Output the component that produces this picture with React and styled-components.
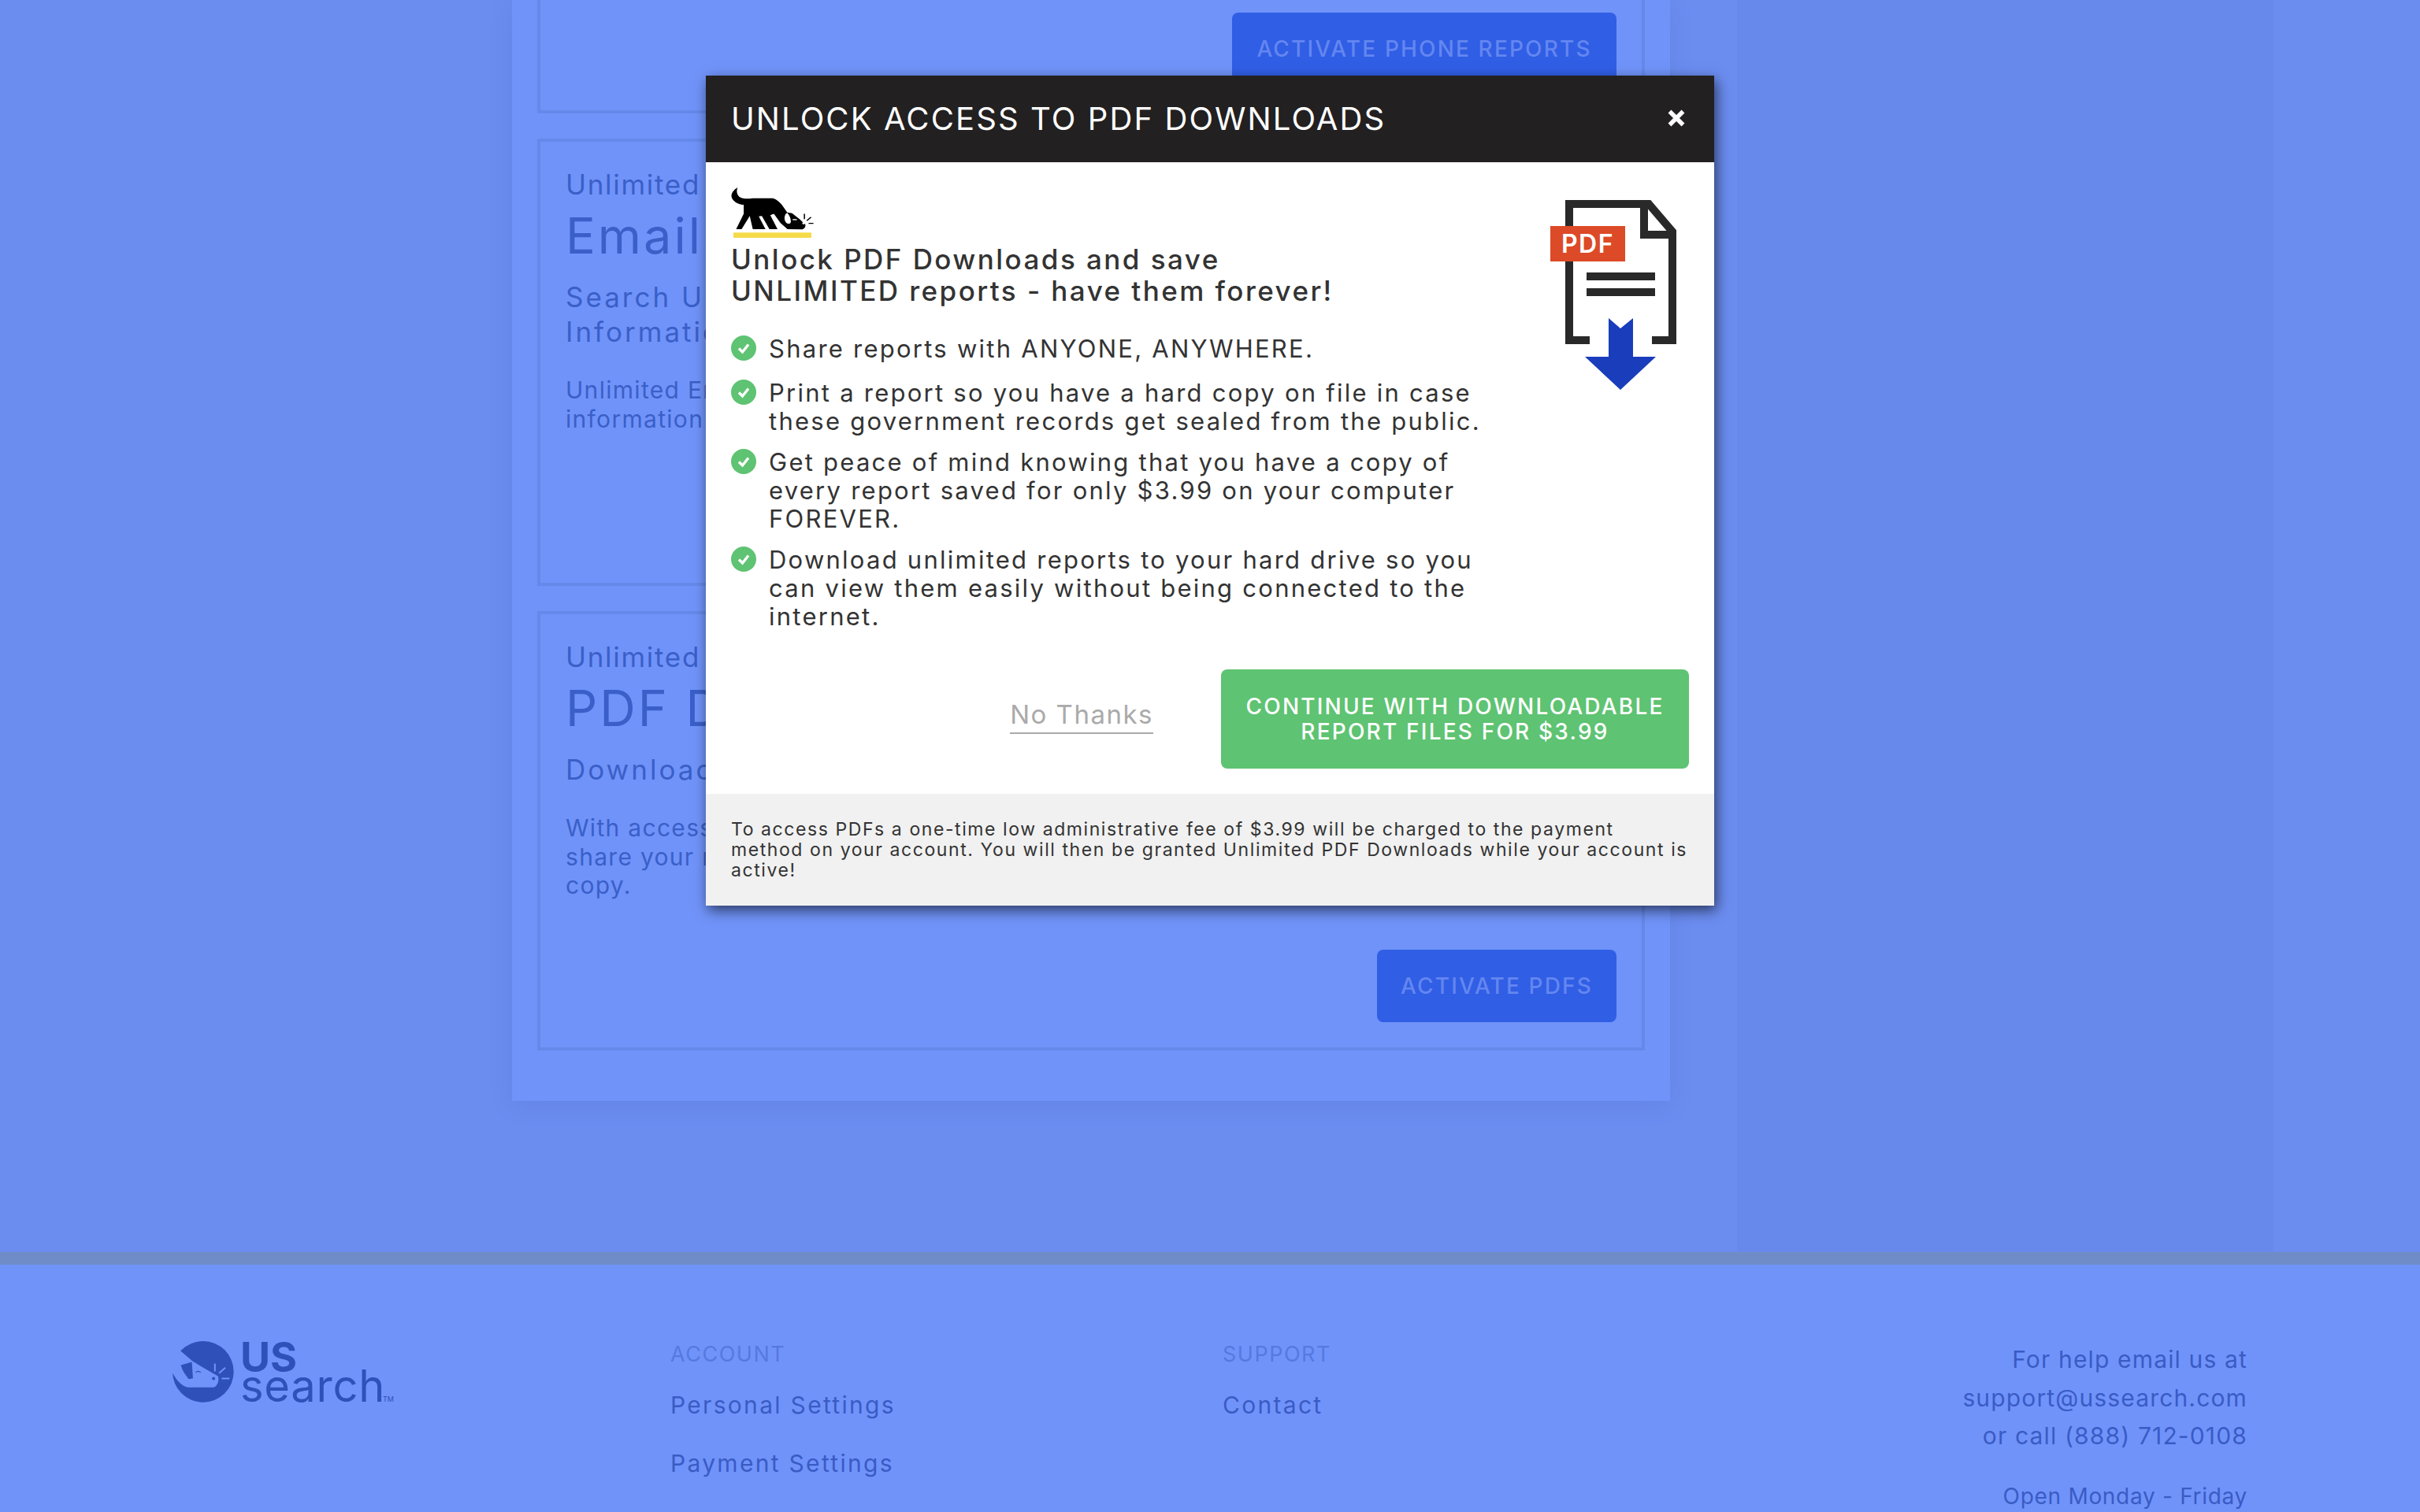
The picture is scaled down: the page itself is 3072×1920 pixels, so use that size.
import styled, { createGlobalStyle } from "styled-components"

const GlobalStyle = createGlobalStyle`
    html, body {
        margin: 0;
        padding: 0;
        background: #6b8df0;
    }
    * { box-sizing: border-box; }
`;

const Page = styled.div`
    position: relative;
    width: 3072px;
    height: 1920px;
    overflow: hidden;
    font-family: Inter, "Liberation Sans", sans-serif;
`;

const Main = styled.main`
    display: flex;
    height: 1590px;
    padding-left: 650px;
    background: #6b8df0;
`;

const Panel = styled.section`
    width: 1470px;
    height: 1398px;
    padding: 0 32px 32px;
    display: flex;
    flex-direction: column;
    gap: 32px;
    background: #7093f9;
    box-shadow: 0 6px 28px rgba(50, 70, 150, 0.12);
`;

const Sidebar = styled.aside`
    width: 681px;
    margin-left: 85px;
    background: #6889ec;
`;

const Card = styled.article`
    height: ${(p) => p.$height}px;
    padding: 32px;
    border: 4px solid #6589ea;
    border-top-width: ${(p) => (p.$clipped ? 0 : 4)}px;
    display: flex;
    flex-direction: column;
    justify-content: ${(p) => (p.$clipped ? "flex-end" : "space-between")};
    color: #3a5fc8;
`;

const CardEyebrow = styled.div`
    font-size: 35px;
    line-height: 44px;
    letter-spacing: 1.7px;
`;

const CardTitle = styled.h2`
    margin: 5px 0 0;
    font-size: 63px;
    line-height: 76px;
    font-weight: 400;
    letter-spacing: 3px;
    white-space: nowrap;
`;

const CardSub = styled.div`
    margin-top: 18px;
    font-size: 35px;
    line-height: 44px;
    letter-spacing: 3px;
    white-space: nowrap;
`;

const CardText = styled.p`
    margin: 34px 0 0;
    font-size: 30px;
    line-height: 36.5px;
    letter-spacing: 1.3px;
    white-space: nowrap;
`;

const ActionRow = styled.div`
    display: flex;
    justify-content: flex-end;
`;

const ActivateButton = styled.button`
    height: 92px;
    width: ${(p) => p.$width}px;
    border: 0;
    border-radius: 8px;
    background: #305ee5;
    color: #6486f0;
    font: 500 28px Inter, "Liberation Sans", sans-serif;
    letter-spacing: 2.15px;
    white-space: nowrap;
`;

const Divider = styled.div`
    height: 16px;
    background: #708cc8;
`;

const Footer = styled.footer`
    height: 314px;
    padding: 96px 219px 0;
    display: grid;
    grid-template-columns: 632px 701px 200px 1fr;
    background: #7093fa;
    color: #3a5bc4;
`;

const Logo = styled.div`
    position: relative;
    display: flex;
    align-items: flex-start;
    gap: 8px;
    margin-top: 1px;
    color: #2f50b9;
`;

const LogoWords = styled.div`
    display: flex;
    flex-direction: column;
`;

const LogoUS = styled.span`
    font-size: 52px;
    line-height: 36px;
    margin-top: 3px;
    font-weight: 700;
`;

const LogoSearch = styled.span`
    font-size: 56px;
    line-height: 44px;
    letter-spacing: 0.8px;
    margin-top: -4px;
`;

const LogoMark = styled.span`
    position: absolute;
    left: 267px;
    top: 69px;
    font-size: 9px;
    line-height: 10px;
`;

const FooterColumn = styled.nav`
    display: flex;
    flex-direction: column;
`;

const FooterHeading = styled.div`
    font-size: 27px;
    line-height: 36px;
    color: #5679de;
    letter-spacing: 1.5px;
`;

const FooterLink = styled.a`
    margin-top: ${(p) => (p.$first ? 28 : 38)}px;
    font-size: 30px;
    line-height: 36px;
    letter-spacing: 2.3px;
    white-space: nowrap;
`;

const HelpBlock = styled.div`
    text-align: right;
    font-size: 30px;
    line-height: 48.5px;
    letter-spacing: 1.15px;
    white-space: nowrap;
`;

const Hours = styled.div`
    margin-top: 32px;
    font-size: 28px;
    line-height: 40px;
    letter-spacing: 0.7px;
`;

const Modal = styled.div`
    position: absolute;
    top: 96px;
    left: 50%;
    width: 1280px;
    margin-left: -640px;
    background: #fff;
    box-shadow: 3px 6px 16px rgba(0, 0, 0, 0.6);
`;

const ModalHeader = styled.header`
    height: 110px;
    padding: 0 37px 2px 32px;
    display: flex;
    align-items: center;
    justify-content: space-between;
    background: #222021;
    color: #fff;
`;

const ModalTitle = styled.h1`
    margin: 0;
    font-size: 40px;
    font-weight: 400;
    letter-spacing: 2.1px;
`;

const CloseButton = styled.button`
    width: 22px;
    height: 22px;
    padding: 0;
    border: 0;
    background: none;
    display: block;
`;

const ModalBody = styled.div`
    height: 802px;
    padding: 32px 32px 32px;
    display: flex;
    flex-direction: column;
    color: #333;
`;

const ModalTop = styled.div`
    flex: 1;
    display: flex;
    justify-content: space-between;
`;

const Pitch = styled.div`
    display: flex;
    flex-direction: column;
`;

const PitchHeading = styled.h2`
    margin: 7px 0 0;
    font-size: 35px;
    line-height: 40px;
    font-weight: 500;
    letter-spacing: 2.45px;
    white-space: nowrap;
`;

const Benefits = styled.ul`
    margin: 36px 0 0;
    padding: 0;
    list-style: none;
    display: flex;
    flex-direction: column;
    gap: 16px;
`;

const Benefit = styled.li`
    min-height: 40px;
    display: flex;
    gap: 16px;
    font-size: 31px;
    line-height: 36px;
    letter-spacing: 2.25px;
    white-space: nowrap;
`;

const CheckIcon = styled.svg`
    flex: none;
    width: 32px;
    height: 32px;
    margin-top: 1px;
`;

const DocIcon = styled.svg`
    flex: none;
    width: 160px;
    height: 241px;
    margin: 16px 16px 0 0;
`;

const ModalActions = styled.div`
    display: flex;
    align-items: center;
    justify-content: flex-end;
    gap: 86px;
`;

const NoThanks = styled.a`
    font-size: 33px;
    line-height: 40px;
    color: #aaa;
    letter-spacing: 1.5px;
    padding-bottom: 3px;
    border-bottom: 2px solid #aaa;
    margin-bottom: 8px;
`;

const ContinueButton = styled.button`
    width: 594px;
    height: 126px;
    border: 0;
    border-radius: 8px;
    background: #5ec372;
    color: #fff;
    font: 500 28px/32px Inter, "Liberation Sans", sans-serif;
    letter-spacing: 2.2px;
`;

const ModalNote = styled.div`
    height: 142px;
    padding: 32px;
    background: #f1f1f1;
    color: #333;
    font-size: 23px;
    line-height: 26px;
    letter-spacing: 1.58px;
    white-space: nowrap;
`;

const benefits = [
    ["Share reports with ANYONE, ANYWHERE."],
    ["Print a report so you have a hard copy on file in case", "these government records get sealed from the public."],
    ["Get peace of mind knowing that you have a copy of", "every report saved for only $3.99 on your computer", "FOREVER."],
    ["Download unlimited reports to your hard drive so you", "can view them easily without being connected to the", "internet."],
];

const DogMark = () => (
    <svg width="105" height="64" viewBox="98 445 274 191" preserveAspectRatio="none" style={{ display: "block" }}>
        <path d="M120 445C105 455 97 470 100 482C104 498 122 510 140 511L140 545L115 603L133 603L160 553L170 603L212 603L190 555L200 553L225 603L252 603L228 550L240 545L262 580L285 603L330 604C340 604 346 596 344 585L325 565L300 543L284 540C270 515 255 490 235 486L170 486C150 489 135 488 125 480C117 472 115 458 120 445Z" fill="#000" />
        <path d="M284 541C274 548 272 566 280 578C286 585 296 584 296 574C296 562 292 550 284 541Z" fill="#fff" />
        <rect x="302" y="565" width="14" height="4" fill="#fff" />
        <circle cx="338" cy="581" r="4" fill="#fff" />
        <path d="M341 545V565M349 571L363 558M355 581H371" stroke="#000" strokeWidth="4" fill="none" />
        <rect x="106" y="616" width="258" height="20" fill="#f5da4a" />
    </svg>
);

const FooterLogoMark = () => (
    <svg width="78" height="78" viewBox="88 98 235 235" style={{ flex: "none" }}>
        <circle cx="205" cy="215" r="117" fill="#2f50b9" />
        <path d="M118 135L165 175L215 205L262 232C268 250 258 272 245 275L150 275C125 273 105 250 88 220L50 180Z" fill="#7093fa" />
        <path d="M120 190L162 178L166 240L150 243C135 225 125 210 120 190Z" fill="#2f50b9" />
        <path d="M177 218C182 212 190 212 196 218" stroke="#2f50b9" strokeWidth="4" fill="none" />
        <circle cx="245" cy="241" r="6" fill="#2f50b9" />
        <path d="M250 184V214M266 221L290 200M276 241H306" stroke="#7093fa" strokeWidth="6" fill="none" />
    </svg>
);

const PdfDocument = () => (
    <DocIcon viewBox="0 0 160 241">
        <path d="M50 178H24V5H125L155 40V178H129" fill="none" stroke="#292929" strokeWidth="10" />
        <path d="M119 5V44H155" fill="none" stroke="#292929" strokeWidth="10" />
        <rect x="46" y="92" width="87" height="10" fill="#292929" />
        <rect x="46" y="112" width="87" height="10" fill="#292929" />
        <rect x="0" y="33" width="95" height="45" fill="#dc4a27" />
        <text x="47.5" y="67" textAnchor="middle" fill="#fff" fontFamily="Inter, sans-serif" fontSize="32" fontWeight="600" letterSpacing="1.5">PDF</text>
        <path d="M74 150L89 163L105 150V199H134L89 241L44 199H74Z" fill="#193dbb" />
    </DocIcon>
);

const Check = () => (
    <CheckIcon viewBox="0 0 32 32">
        <circle cx="16" cy="16" r="16" fill="#5ec372" />
        <path d="M10 16.5L14.5 21L22 11.5" fill="none" stroke="#fff" strokeWidth="3.4" />
    </CheckIcon>
);

const App = () => {
    return (
        <Page>
            <GlobalStyle />
            <Main>
                <Panel>
                    <Card $height={144} $clipped>
                        <ActionRow>
                            <ActivateButton $width={488}>ACTIVATE PHONE REPORTS</ActivateButton>
                        </ActionRow>
                    </Card>
                    <Card $height={568}>
                        <div>
                            <CardEyebrow>Unlimited</CardEyebrow>
                            <CardTitle>Email Search</CardTitle>
                            <CardSub>Search Unlimited Email<br />Information</CardSub>
                            <CardText>Unlimited Email Search<br />information</CardText>
                        </div>
                    </Card>
                    <Card $height={558}>
                        <div>
                            <CardEyebrow>Unlimited</CardEyebrow>
                            <CardTitle>PDF Downloads</CardTitle>
                            <CardSub>Download reports</CardSub>
                            <CardText>With access to PDFs you can<br />share your reports and keep a<br />copy.</CardText>
                        </div>
                        <ActionRow>
                            <ActivateButton $width={304}>ACTIVATE PDFS</ActivateButton>
                        </ActionRow>
                    </Card>
                </Panel>
                <Sidebar />
            </Main>
            <Divider />
            <Footer>
                <Logo>
                    <FooterLogoMark />
                    <LogoWords>
                        <LogoUS>US</LogoUS>
                        <LogoSearch>search</LogoSearch>
                    </LogoWords>
                    <LogoMark>TM</LogoMark>
                </Logo>
                <FooterColumn>
                    <FooterHeading>ACCOUNT</FooterHeading>
                    <FooterLink $first>Personal Settings</FooterLink>
                    <FooterLink>Payment Settings</FooterLink>
                    <FooterLink>Report Monitoring</FooterLink>
                </FooterColumn>
                <FooterColumn>
                    <FooterHeading>SUPPORT</FooterHeading>
                    <FooterLink $first>Contact</FooterLink>
                </FooterColumn>
                <HelpBlock>
                    For help email us at<br />
                    support@ussearch.com<br />
                    or call (888) 712-0108
                    <Hours>Open Monday - Friday</Hours>
                </HelpBlock>
            </Footer>
            <Modal>
                <ModalHeader>
                    <ModalTitle>UNLOCK ACCESS TO PDF DOWNLOADS</ModalTitle>
                    <CloseButton aria-label="Close">
                        <svg width="22" height="22" viewBox="0 0 22 22" style={{ display: "block" }}>
                            <path d="M2.5 2.5L19.5 19.5M19.5 2.5L2.5 19.5" stroke="#fff" strokeWidth="5.5" />
                        </svg>
                    </CloseButton>
                </ModalHeader>
                <ModalBody>
                    <ModalTop>
                        <Pitch>
                            <DogMark />
                            <PitchHeading>Unlock PDF Downloads and save<br />UNLIMITED reports - have them forever!</PitchHeading>
                            <Benefits>
                                {benefits.map((lines) => (
                                    <Benefit key={lines[0]}>
                                        <Check />
                                        <span>
                                            {lines.map((line) => (
                                                <div key={line}>{line}</div>
                                            ))}
                                        </span>
                                    </Benefit>
                                ))}
                            </Benefits>
                        </Pitch>
                        <PdfDocument />
                    </ModalTop>
                    <ModalActions>
                        <NoThanks>No Thanks</NoThanks>
                        <ContinueButton>CONTINUE WITH DOWNLOADABLE<br />REPORT FILES FOR $3.99</ContinueButton>
                    </ModalActions>
                </ModalBody>
                <ModalNote>
                    To access PDFs a one-time low administrative fee of $3.99 will be charged to the payment<br />
                    method on your account. You will then be granted Unlimited PDF Downloads while your account is<br />
                    active!
                </ModalNote>
            </Modal>
        </Page>
    )
}

export default App
